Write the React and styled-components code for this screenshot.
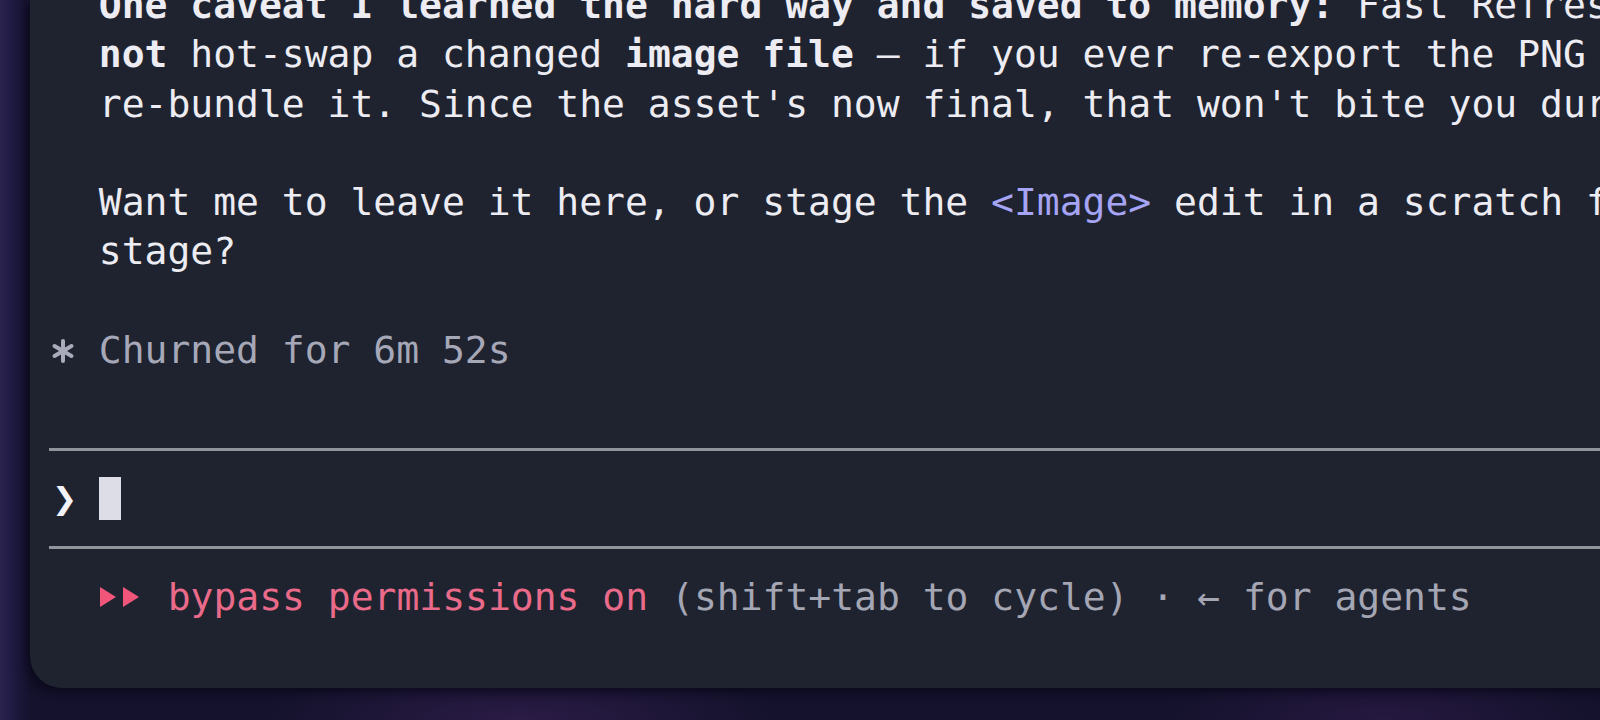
import React from "react";
import styled, { createGlobalStyle } from "styled-components";

const GlobalStyle = createGlobalStyle`
  html, body {
    margin: 0;
    padding: 0;
    overflow: hidden;
    background: #16132c;
  }
`;

const ROW = 49.3;

const Stage = styled.div`
  width: 100vw;
  height: 720px;
  display: flex;
  padding: 0 0 32px 30px;
  box-sizing: border-box;
  background:
    radial-gradient(ellipse 260px 60px at 520px 720px, #2b1b46 0%, transparent 100%),
    radial-gradient(ellipse 220px 60px at 1380px 720px, #261840 0%, transparent 100%),
    linear-gradient(90deg, #2a2350 0px, #1d1940 14px, #14122c 30px);
  overflow: hidden;
`;

const Window = styled.div`
  flex: none;
  width: 1640px;
  height: 100%;
  background: #1f2330;
  border-radius: 0 0 0 32px;
  box-shadow: -4px 4px 10px rgba(5, 4, 18, 0.6);
  overflow: hidden;
  padding-left: 23px;
  box-sizing: border-box;
`;

const Screen = styled.div`
  margin-top: -19px;
  display: flex;
  flex-direction: column;
  font-family: "DejaVu Sans Mono", "Liberation Mono", monospace;
  font-size: 38px;
  color: #ececf2;
`;

const Row = styled.div`
  height: ${ROW}px;
  line-height: ${ROW}px;
  display: flex;
  align-items: center;
  white-space: pre;
`;

const Gutter = styled.span`
  flex: none;
  width: 45.8px;
  display: flex;
  align-items: center;
  color: ${(p) => p.$color || "#ececf2"};
`;

const Text = styled.span`
  white-space: pre;
  color: ${(p) => p.$color || "inherit"};
  font-weight: ${(p) => (p.$bold ? 700 : 400)};
`;

const Rule = styled.div`
  height: ${ROW}px;
  display: flex;
  align-items: center;
  margin-left: -4px;
  &::before {
    content: "";
    flex: 1;
    height: 3px;
    background: #91939d;
  }
`;

const Cursor = styled.span`
  width: 22px;
  height: 43px;
  background: #dcdde6;
`;

const Chevron = styled.span`
  font-family: "DejaVu Sans", sans-serif;
  font-size: 30px;
  font-weight: 700;
  color: #f2f2f8;
  margin-left: -1px;
`;

const Asterisk = () => (
  <svg width="24" height="26" viewBox="0 0 24 26" style={{ marginLeft: -2 }}>
    <g stroke="#a9abbb" strokeWidth="4" strokeLinecap="round">
      <line x1="12" y1="3" x2="12" y2="23" />
      <line x1="3.5" y1="8" x2="20.5" y2="18" />
      <line x1="3.5" y1="18" x2="20.5" y2="8" />
    </g>
  </svg>
);

const FastForward = () => (
  <svg width="46" height="22" viewBox="0 0 46 22">
    <g fill="#f2557a">
      <polygon points="1,1 17,11 1,21" />
      <polygon points="24,1 40,11 24,21" />
    </g>
  </svg>
);

const Blank = () => <Row> </Row>;

const App = () => {
  return (
    <>
      <GlobalStyle />
      <Stage>
        <Window>
          <Screen>
            <Row>
              <Gutter />
              <Text $bold>One caveat I learned the hard way and saved to memory:</Text>
              <Text> Fast Refresh will</Text>
            </Row>
            <Row>
              <Gutter />
              <Text $bold>not</Text>
              <Text> hot-swap a changed </Text>
              <Text $bold>image file</Text>
              <Text> — if you ever re-export the PNG you'll need to</Text>
            </Row>
            <Row>
              <Gutter />
              <Text>re-bundle it. Since the asset's now final, that won't bite you during</Text>
            </Row>
            <Blank />
            <Row>
              <Gutter />
              <Text>Want me to leave it here, or stage the </Text>
              <Text $color="#a6a4f4">&lt;Image&gt;</Text>
              <Text> edit in a scratch file for the next</Text>
            </Row>
            <Row>
              <Gutter />
              <Text>stage?</Text>
            </Row>
            <Blank />
            <Row>
              <Gutter>
                <Asterisk />
              </Gutter>
              <Text $color="#a6a8b8">Churned for 6m 52s</Text>
            </Row>
            <Blank />
            <Rule />
            <Row>
              <Gutter>
                <Chevron>❯</Chevron>
              </Gutter>
              <Cursor />
            </Row>
            <Rule />
            <Row>
              <Gutter />
              <FastForward />
              <Text> </Text>
              <Text $color="#ea6a8a">bypass permissions on</Text>
              <Text $color="#a4a6b4"> (shift+tab to cycle) · ← for agents</Text>
            </Row>
          </Screen>
        </Window>
      </Stage>
    </>
  );
};

export default App;
